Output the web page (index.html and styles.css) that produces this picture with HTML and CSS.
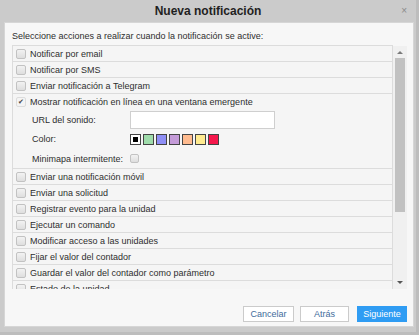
FILE: index.html
```html
<!DOCTYPE html>
<html lang="es">
<head>
<meta charset="utf-8">
<link rel="stylesheet" href="styles.css">
</head>
<body>
<div class="dialog">
  <div class="titlebar">
    <span></span>
    <h1 class="title">Nueva notificación</h1>
    <span class="close">×</span>
  </div>
  <div class="panel">
    <div class="intro">Seleccione acciones a realizar cuando la notificación se active:</div>
    <div class="listwrap">
      <div class="list">
        <div class="row"><span class="cb"></span><span>Notificar por email</span></div>
        <div class="row"><span class="cb"></span><span>Notificar por SMS</span></div>
        <div class="row"><span class="cb"></span><span>Enviar notificación a Telegram</span></div>
        <div class="row expanded">
          <div class="rowhead"><span class="cb checked">✔</span><span>Mostrar notificación en línea en una ventana emergente</span></div>
          <div class="sub">
            <span class="lbl">URL del sonido:</span>
            <span class="input"></span>
          </div>
          <div class="sub swrow">
            <span class="lbl">Color:</span>
            <span class="swatches">
              <span class="sw sel"></span>
              <span class="sw green"></span>
              <span class="sw blue"></span>
              <span class="sw purple"></span>
              <span class="sw orange"></span>
              <span class="sw yellow"></span>
              <span class="sw red"></span>
            </span>
          </div>
          <div class="sub mmrow">
            <span class="lbl">Minimapa intermitente:</span>
            <span class="cb small"></span>
          </div>
        </div>
        <div class="row"><span class="cb"></span><span>Enviar una notificación móvil</span></div>
        <div class="row"><span class="cb"></span><span>Enviar una solicitud</span></div>
        <div class="row"><span class="cb"></span><span>Registrar evento para la unidad</span></div>
        <div class="row"><span class="cb"></span><span>Ejecutar un comando</span></div>
        <div class="row"><span class="cb"></span><span>Modificar acceso a las unidades</span></div>
        <div class="row"><span class="cb"></span><span>Fijar el valor del contador</span></div>
        <div class="row"><span class="cb"></span><span>Guardar el valor del contador como parámetro</span></div>
        <div class="row"><span class="cb"></span><span>Estado de la unidad</span></div>
      </div>
      <div class="scrollbar">
        <span class="arrow up"></span>
        <span class="track"><span class="thumb"></span></span>
        <span class="arrow down"></span>
      </div>
    </div>
    <div class="footer">
      <button class="btn">Cancelar</button>
      <button class="btn">Atrás</button>
      <button class="btn primary">Siguiente</button>
    </div>
  </div>
</div>
</body>
</html>
```
FILE: styles.css
```css
* { box-sizing: border-box; }
html, body {
  margin: 0;
  padding: 0;
  background: #c9c9c9;
}
body {
  font-family: "Liberation Sans", Arial, sans-serif;
  font-size: 9px;
  color: #2e2e2e;
}
.dialog {
  width: 419px;
  height: 335px;
  background: #cbcbcb;
  border-right: 3px solid #bdbdbd;
  border-bottom: 3px solid #bdbdbd;
}
.titlebar {
  height: 22px;
  display: grid;
  grid-template-columns: 1fr auto 1fr;
  align-items: center;
}
.title {
  margin: 0;
  font-size: 12px;
  font-weight: bold;
  color: #1f1f1f;
  line-height: 22px;
}
.close {
  justify-self: end;
  margin-right: 9px;
  color: #8a8a8a;
  font-size: 10px;
  line-height: 22px;
}
.panel {
  margin-left: 4px;
  width: 410px;
  height: 305px;
  background: #f7f7f7;
  border: 1px solid #d6d6d6;
  padding: 7px 6px 0 7px;
  display: flex;
  flex-direction: column;
}
.intro {
  line-height: 13px;
  margin-bottom: 2px;
}
.listwrap {
  height: 244px;
  display: flex;
}
.list {
  flex: 1;
  overflow: hidden;
  border-top: 1px solid #dcdcdc;
}
.row {
  border: 1px solid #dcdcdc;
  border-top: none;
  background: #f5f5f5;
  height: 16px;
  display: flex;
  align-items: center;
  padding-left: 3px;
  gap: 4px;
  white-space: nowrap;
  line-height: 12px;
}
.row.expanded {
  height: 75px;
  flex-direction: column;
  align-items: stretch;
  padding-left: 3px;
  gap: 0;
}
.rowhead {
  height: 15px;
  display: flex;
  align-items: center;
  gap: 4px;
}
.sub {
  display: flex;
  align-items: center;
  padding-left: 16px;
}
.lbl {
  width: 98px;
  flex: none;
}
.sub:nth-child(2) { height: 19px; margin-top: 1px; }
.swrow { height: 20px; }
.mmrow { height: 19px; }
.input {
  width: 145px;
  height: 18px;
  background: #fff;
  border: 1px solid #cfcfcf;
}
.swatches {
  display: flex;
  gap: 2px;
}
.sw {
  width: 11px;
  height: 11px;
  border: 1px solid #444;
}
.sw.sel {
  background: #fff;
  display: flex;
  align-items: center;
  justify-content: center;
}
.sw.sel::after {
  content: "";
  width: 5px;
  height: 5px;
  background: #000;
}
.green { background: #9fdcab; }
.blue { background: #8f8ff6; }
.purple { background: #c49bd8; }
.orange { background: #ffbb8f; }
.yellow { background: #ffeb90; }
.red { background: #f5184c; }
.cb {
  flex: none;
  width: 10px;
  height: 10px;
  border: 1px solid #c2c2c2;
  border-radius: 2px;
  background: linear-gradient(#f2f2f2, #dedede);
  display: inline-flex;
  align-items: center;
  justify-content: center;
  font-size: 7px;
  line-height: 8px;
  color: #444;
}
.cb.checked {
  background: #f4f4f4;
  border-color: #dcdcdc;
}
.cb.small {
  width: 9px;
  height: 9px;
}
.scrollbar {
  width: 14px;
  flex: none;
  background: #f0f0f0;
  display: flex;
  flex-direction: column;
  align-items: center;
  padding: 5px 0 5px;
  height: 243px;
  margin-top: 1px;
}
.arrow {
  width: 0;
  height: 0;
  border-left: 3px solid transparent;
  border-right: 3px solid transparent;
  flex: none;
}
.arrow.up { border-bottom: 3px solid #7a7a7a; }
.arrow.down { border-top: 3px solid #555; }
.track {
  flex: 1;
  width: 100%;
  padding: 4px 2px;
  display: flex;
  flex-direction: column;
}
.thumb {
  height: 154px;
  background: #c1c1c1;
}
.footer {
  display: flex;
  justify-content: flex-end;
  gap: 6px;
  margin-top: 17px;
}
.btn {
  font-family: "Liberation Sans", Arial, sans-serif;
  font-size: 9px;
  height: 16px;
  padding: 0;
  border: 1px solid #cbcbcb;
  background: #fff;
  color: #3f6c9c;
  width: 51px;
  line-height: 14px;
}
.btn:nth-child(2) { width: 49px; margin-right: 2px; }
.btn.primary {
  background: #2f9cf3;
  border-color: #2f9cf3;
  color: #fff;
  width: 50px;
}
```
